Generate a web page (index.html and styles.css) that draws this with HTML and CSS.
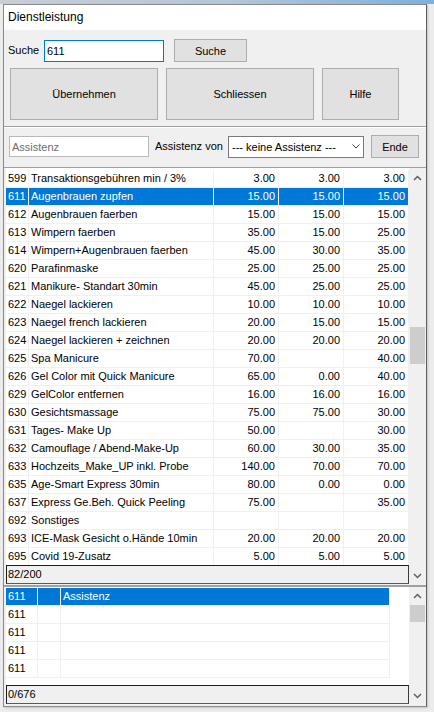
FILE: index.html
```html
<!DOCTYPE html>
<html lang="de">
<head>
<meta charset="utf-8">
<title>Dienstleistung</title>
<link rel="stylesheet" href="styles.css">
</head>
<body>
<div class="desktop-strip"></div>
<div class="window">
  <div class="titlebar">Dienstleistung</div>
  <div class="content">
    <div class="search-row">
      <label class="lbl search-lbl" for="q">Suche</label>
      <input id="q" class="field search-field" value="611">
      <button class="btn btn-search">Suche</button>
    </div>
    <div class="action-row">
      <button class="btn btn-big btn-wide">Übernehmen</button>
      <button class="btn btn-big btn-wide">Schliessen</button>
      <button class="btn btn-big btn-help">Hilfe</button>
    </div>
    <div class="separator"></div>
    <div class="assist-row">
      <input class="field assist-field" placeholder="Assistenz">
      <span class="lbl assist-lbl">Assistenz von</span>
      <div class="combo"><span>--- keine Assistenz ---</span><svg class="combo-arrow" width="8" height="5" viewBox="0 0 8 5"><polyline points="0.5,0.5 4,4 7.5,0.5" fill="none" stroke="#404040" stroke-width="1"/></svg></div>
      <button class="btn btn-end">Ende</button>
    </div>

    <div class="grid-section main-grid">
      <div class="grid-col">
        <div class="grid-body">
          <div class="row"><div class="cell">599</div><div class="cell">Transaktionsgebühren min / 3%</div><div class="cell num">3.00</div><div class="cell num">3.00</div><div class="cell num">3.00</div></div>
          <div class="row sel"><div class="cell">611</div><div class="cell">Augenbrauen zupfen</div><div class="cell num">15.00</div><div class="cell num">15.00</div><div class="cell num">15.00</div></div>
          <div class="row"><div class="cell">612</div><div class="cell">Augenbrauen faerben</div><div class="cell num">15.00</div><div class="cell num">15.00</div><div class="cell num">15.00</div></div>
          <div class="row"><div class="cell">613</div><div class="cell">Wimpern faerben</div><div class="cell num">35.00</div><div class="cell num">15.00</div><div class="cell num">25.00</div></div>
          <div class="row"><div class="cell">614</div><div class="cell">Wimpern+Augenbrauen faerben</div><div class="cell num">45.00</div><div class="cell num">30.00</div><div class="cell num">35.00</div></div>
          <div class="row"><div class="cell">620</div><div class="cell">Parafinmaske</div><div class="cell num">25.00</div><div class="cell num">25.00</div><div class="cell num">25.00</div></div>
          <div class="row"><div class="cell">621</div><div class="cell">Manikure- Standart 30min</div><div class="cell num">45.00</div><div class="cell num">25.00</div><div class="cell num">25.00</div></div>
          <div class="row"><div class="cell">622</div><div class="cell">Naegel lackieren</div><div class="cell num">10.00</div><div class="cell num">10.00</div><div class="cell num">10.00</div></div>
          <div class="row"><div class="cell">623</div><div class="cell">Naegel french lackieren</div><div class="cell num">20.00</div><div class="cell num">15.00</div><div class="cell num">15.00</div></div>
          <div class="row"><div class="cell">624</div><div class="cell">Naegel lackieren + zeichnen</div><div class="cell num">20.00</div><div class="cell num">20.00</div><div class="cell num">20.00</div></div>
          <div class="row"><div class="cell">625</div><div class="cell">Spa Manicure</div><div class="cell num">70.00</div><div class="cell num"></div><div class="cell num">40.00</div></div>
          <div class="row"><div class="cell">626</div><div class="cell">Gel Color mit Quick Manicure</div><div class="cell num">65.00</div><div class="cell num">0.00</div><div class="cell num">40.00</div></div>
          <div class="row"><div class="cell">629</div><div class="cell">GelColor entfernen</div><div class="cell num">16.00</div><div class="cell num">16.00</div><div class="cell num">16.00</div></div>
          <div class="row"><div class="cell">630</div><div class="cell">Gesichtsmassage</div><div class="cell num">75.00</div><div class="cell num">75.00</div><div class="cell num">30.00</div></div>
          <div class="row"><div class="cell">631</div><div class="cell">Tages- Make Up</div><div class="cell num">50.00</div><div class="cell num"></div><div class="cell num">30.00</div></div>
          <div class="row"><div class="cell">632</div><div class="cell">Camouflage / Abend-Make-Up</div><div class="cell num">60.00</div><div class="cell num">30.00</div><div class="cell num">35.00</div></div>
          <div class="row"><div class="cell">633</div><div class="cell">Hochzeits_Make_UP inkl. Probe</div><div class="cell num">140.00</div><div class="cell num">70.00</div><div class="cell num">70.00</div></div>
          <div class="row"><div class="cell">635</div><div class="cell">Age-Smart Express 30min</div><div class="cell num">80.00</div><div class="cell num">0.00</div><div class="cell num">0.00</div></div>
          <div class="row"><div class="cell">637</div><div class="cell">Express Ge.Beh. Quick Peeling</div><div class="cell num">75.00</div><div class="cell num"></div><div class="cell num">35.00</div></div>
          <div class="row"><div class="cell">692</div><div class="cell">Sonstiges</div><div class="cell num"></div><div class="cell num"></div><div class="cell num"></div></div>
          <div class="row"><div class="cell">693</div><div class="cell">ICE-Mask Gesicht o.Hände 10min</div><div class="cell num">20.00</div><div class="cell num">20.00</div><div class="cell num">20.00</div></div>
          <div class="row"><div class="cell">695</div><div class="cell">Covid 19-Zusatz</div><div class="cell num">5.00</div><div class="cell num">5.00</div><div class="cell num">5.00</div></div>
        </div>
        <div class="status">82/200</div>
      </div>
      <div class="vscroll">
        <div class="sb-btn sb-up"><svg width="9" height="6" viewBox="0 0 9 6"><polyline points="1,5 4.5,1.5 8,5" fill="none" stroke="#606060" stroke-width="1.5"/></svg></div>
        <div class="sb-track"><div class="sb-thumb"></div></div>
        <div class="sb-btn sb-down"><svg width="9" height="6" viewBox="0 0 9 6"><polyline points="1,1 4.5,4.5 8,1" fill="none" stroke="#606060" stroke-width="1.5"/></svg></div>
      </div>
    </div>

    <div class="splitter"></div>

    <div class="grid-section sub-grid">
      <div class="grid-col">
        <div class="grid-body">
          <div class="row sel"><div class="cell">611</div><div class="cell"></div><div class="cell">Assistenz</div></div>
          <div class="row"><div class="cell">611</div><div class="cell"></div><div class="cell"></div></div>
          <div class="row"><div class="cell">611</div><div class="cell"></div><div class="cell"></div></div>
          <div class="row"><div class="cell">611</div><div class="cell"></div><div class="cell"></div></div>
          <div class="row"><div class="cell">611</div><div class="cell"></div><div class="cell"></div></div>
        </div>
        <div class="status">0/676</div>
      </div>
      <div class="vscroll">
        <div class="sb-btn sb-up"><svg width="9" height="6" viewBox="0 0 9 6"><polyline points="1,5 4.5,1.5 8,5" fill="none" stroke="#606060" stroke-width="1.5"/></svg></div>
        <div class="sb-track"><div class="sb-thumb"></div></div>
        <div class="sb-btn sb-down"><svg width="9" height="6" viewBox="0 0 9 6"><polyline points="1,1 4.5,4.5 8,1" fill="none" stroke="#606060" stroke-width="1.5"/></svg></div>
      </div>
    </div>
  </div>
</div>
</body>
</html>
```
FILE: styles.css
```css
* { box-sizing: border-box; }
html, body { margin: 0; padding: 0; }
body {
  background: #ececec;
  font-family: "Liberation Sans", Arial, sans-serif;
  font-size: 11px;
  color: #000;
  width: 434px;
  height: 712px;
  overflow: hidden;
}
.desktop-strip {
  height: 4px;
  background: linear-gradient(to right, #c8ced5 0%, #b3c5d7 55%, #7eb0dc 100%);
}
.window {
  margin-left: 3px;
  width: 424px;
  border: 1px solid #8a8a8a;
  border-right-color: #5f5f5f;
  box-shadow: 1px 1px 2px rgba(0, 0, 0, 0.18);
}
.titlebar {
  height: 25px;
  background: #fff;
  padding-left: 4px;
  font-size: 12px;
  line-height: 25px;
}
.content {
  background: #f0f0f0;
  height: 676px;
  padding-bottom: 2px;
}
.lbl { line-height: 23px; white-space: nowrap; }
.field {
  font: inherit;
  color: #000;
  background: #fff;
  outline: none;
  margin: 0;
  padding: 0 2px;
}
.btn {
  font: inherit;
  color: #000;
  background: #e1e1e1;
  border: 1px solid #adadad;
  padding: 0;
  margin: 0;
}
.search-row {
  display: flex;
  align-items: flex-start;
  height: 32px;
  padding: 9px 0 0 4px;
}
.search-lbl { width: 36px; }
.search-field {
  width: 120px;
  height: 22px;
  margin-top: 1px;
  border: 1px solid #0078d7;
}
.btn-search { margin-left: 10px; width: 73px; height: 23px; }
.action-row {
  display: flex;
  gap: 8px;
  margin-top: 6px;
  height: 52px;
  padding-left: 6px;
}
.btn-big { height: 52px; }
.btn-wide { width: 148px; }
.btn-help { width: 77px; }
.separator {
  margin-top: 6px;
  height: 2px;
  border-top: 1px solid #a0a0a0;
  background: #fff;
}
.assist-row {
  display: flex;
  align-items: center;
  margin-top: 7px;
  height: 23px;
  padding-left: 5px;
}
.assist-field {
  width: 140px;
  height: 21px;
  border: 1px solid #b9b9b9;
}
.assist-field::placeholder { color: #6d6d6d; opacity: 1; }
.assist-lbl { margin-left: 6px; width: 73px; }
.combo {
  width: 136px;
  height: 22px;
  border: 1px solid #7a7a7a;
  background: #fff;
  display: flex;
  align-items: center;
  justify-content: space-between;
  padding: 0 3px 0 3px;
  white-space: nowrap;
}
.combo-arrow { display: block; }
.btn-end { margin-left: 7px; width: 48px; height: 23px; }

.grid-section { display: flex; padding-left: 2px; }
.main-grid {
  margin-top: 9px;
  border-top: 1px solid #a0a0a0;
  height: 417px;
}
.grid-col {
  width: 403px;
  display: flex;
  flex-direction: column;
}
.grid-body {
  background: #fff;
  overflow: hidden;
}
.main-grid .grid-body { height: 397px; padding-top: 2px; }
.sub-grid .grid-body { height: 98px; padding-top: 1px; }
.row {
  display: grid;
  height: 18px;
  line-height: 17px;
  border-bottom: 1px solid #f0f0f0;
}
.main-grid .row { grid-template-columns: 23px 185px 65px 65px 65px; }
.sub-grid .row { grid-template-columns: 32px 23px 329px; width: 384px; }
.cell {
  border-right: 1px solid #f0f0f0;
  padding: 0 2px;
  white-space: nowrap;
  overflow: hidden;
}
.cell.num { text-align: right; padding-right: 3px; }
.row.sel { background: #0078d7; color: #fff; }
.status {
  height: 19px;
  line-height: 17px;
  padding-left: 1px;
  background: #f0f0f0;
  border: 1px solid #1e1e1e;
  border-right-color: #3c3c3c;
  border-bottom-color: #5a5a5a;
}
.vscroll {
  width: 17px;
  display: flex;
  flex-direction: column;
  background: #f0f0f0;
}
.sb-btn {
  height: 17px;
  display: flex;
  align-items: center;
  justify-content: center;
  flex: none;
}
.sb-btn svg { display: block; }
.main-grid .sb-up { height: 20px; }
.sb-track { flex: 1; padding: 0 1px; }
.sb-thumb { background: #cdcdcd; }
.main-grid .sb-thumb { margin-top: 139px; height: 37px; }
.sub-grid .sb-thumb { margin-top: 1px; height: 17px; }
.splitter {
  margin-top: 1px;
  height: 2px;
  background: #a0a0a0;
}
.sub-grid { height: 117px; }
```
